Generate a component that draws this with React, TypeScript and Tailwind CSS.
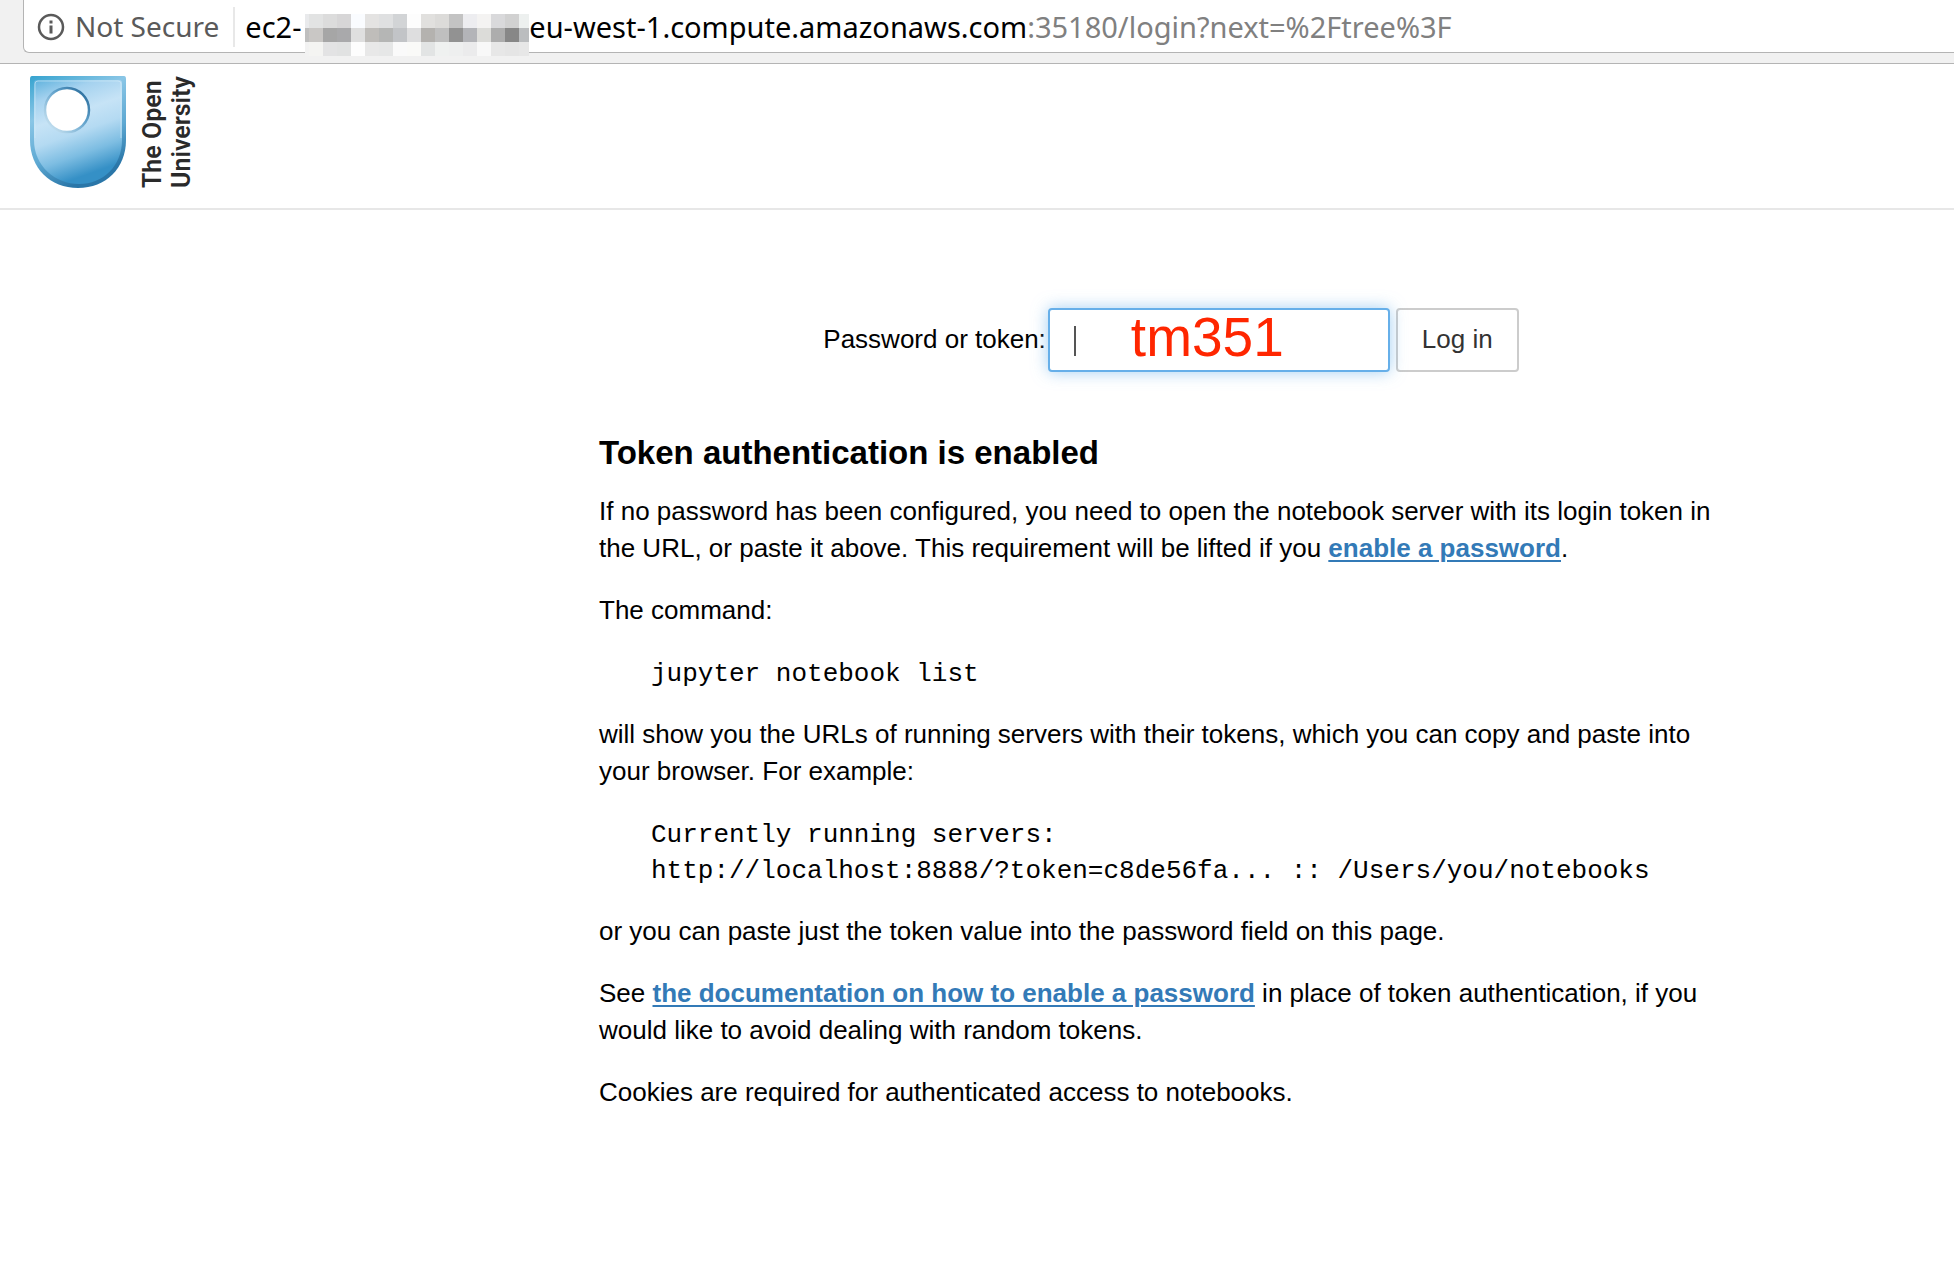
import React from "react";

const mosaicRows: string[][] = [
  ["#e9eaec", "#e2e3e3", "#dcdcdc", "#d7d6d7", "#fafcff", "#e4e3e2", "#dfe0e1", "#d2d4d6", "#fdfdfd", "#e1e0de", "#dcdbd9", "#c3c3c3", "#ededf0", "#f4f3f2", "#d9d9db", "#d1d1d1", "#edf0ef"],
  ["#bfbfbf", "#c9c7c5", "#a6a6a6", "#a9a9ab", "#dfdfdf", "#bfbdba", "#b5b6b5", "#c2c4c7", "#dededf", "#b4b2af", "#bfbfbf", "#929292", "#b3b4b8", "#dcdcd9", "#adadad", "#878787", "#bbbdbf"],
  ["#f2f2f2", "#f4f4f2", "#e3e3e4", "#e1e2e2", "#fdfdfd", "#e8e8e8", "#e6e7e7", "#fafafa", "#fafaf8", "#e2e4e4", "#eff1f0", "#eeefef", "#ebebec", "#f8f8f8", "#e7e7e7", "#e5e5e5", "#e7e7e7"],
];

function InfoIcon() {
  return (
    <svg width="28" height="28" viewBox="0 0 28 28" fill="none" aria-hidden="true" className="shrink-0">
      <circle cx="14" cy="14" r="12" stroke="#5a5a5a" strokeWidth="2.5" />
      <rect x="12.5" y="7.5" width="3" height="3" fill="#5a5a5a" />
      <rect x="12.5" y="12.5" width="3" height="8" fill="#5a5a5a" />
    </svg>
  );
}

/* Blocks that hide the host's address in the URL. */
function Mosaic() {
  return (
    <span
      aria-hidden="true"
      className="relative z-10 mt-[14px] grid shrink-0 grid-cols-[4px_repeat(15,14px)_10px] grid-rows-[14px_14px_14px]"
    >
      {mosaicRows.flatMap((row, r) =>
        row.map((color, c) => <span key={`${r}-${c}`} style={{ backgroundColor: color }} />),
      )}
    </span>
  );
}

function AddressBar() {
  return (
    <div className="h-16 border-b border-[#b4b4b4] bg-[#f1f1f1] pl-[23px]">
      <div className="flex h-[53px] items-start rounded-bl-md border-b border-l border-[#b4b4b4] bg-white pl-[13px] font-['Noto_Sans',sans-serif] text-[29px] leading-[53px] whitespace-nowrap">
        <button type="button" className="flex h-[53px] items-center gap-[10px] text-[28px] text-[#5a5a5a]">
          <InfoIcon />
          <span>Not Secure</span>
        </button>
        <span className="mt-[7px] ml-[14px] h-10 w-[2px] shrink-0 bg-[#e8e8e8]" />
        <div className="ml-[10px] flex items-start">
          <span className="w-[60px] text-black">ec2-</span>
          <Mosaic />
          <span className="text-black">eu-west-1.compute.amazonaws.com</span>
          <span className="text-[#808080]">:35180/login?next=%2Ftree%3F</span>
        </div>
      </div>
    </div>
  );
}

function Logo() {
  return (
    <svg width="168" height="112" viewBox="0 0 168 112" role="img" aria-label="The Open University">
      <defs>
        <linearGradient id="shield" x1="0" y1="0" x2="0.3" y2="1">
          <stop offset="0" stopColor="#5fb2dd" />
          <stop offset="0.2" stopColor="#a5d2ef" />
          <stop offset="0.42" stopColor="#c6e3f6" />
          <stop offset="0.6" stopColor="#b4daf2" />
          <stop offset="0.8" stopColor="#7dbde2" />
          <stop offset="1" stopColor="#3590c6" />
        </linearGradient>
        <linearGradient id="edge" x1="0" y1="0" x2="0.4" y2="1">
          <stop offset="0" stopColor="#35a3cf" />
          <stop offset="0.35" stopColor="#8ac6e6" />
          <stop offset="0.7" stopColor="#5da8d2" />
          <stop offset="1" stopColor="#2a76a8" />
        </linearGradient>
        <linearGradient id="ring" x1="1" y1="0" x2="0" y2="1">
          <stop offset="0" stopColor="#1f6191" />
          <stop offset="0.4" stopColor="#5d9fc9" />
          <stop offset="1" stopColor="#d9edf8" />
        </linearGradient>
      </defs>
      <path d="M2 0H94Q96 0 96 3V64C96 92 76 112 48 112S0 92 0 64V3Q0 0 2 0Z" fill="url(#edge)" />
      <path d="M7 4H89Q92 4 92 7V64C92 90 73 108 49 108S4 90 4 64V7Q4 4 7 4Z" fill="url(#shield)" />
      <path d="M5 62V8Q5 5 8 5H88Q91 5 91 8V62" fill="none" stroke="#d4ecf8" strokeWidth="1" opacity="0.6" />
      <circle cx="37" cy="34" r="22" fill="#fff" stroke="url(#ring)" strokeWidth="2.5" />
      <g fill="#2a2a2a" fontFamily="Roboto, sans-serif" fontWeight="600" fontSize="25">
        <text transform="translate(131 112) rotate(-90)">The Open</text>
        <text transform="translate(160 112) rotate(-90)">University</text>
      </g>
    </svg>
  );
}

function LoginForm() {
  return (
    <form className="flex items-center justify-center" onSubmit={(e) => e.preventDefault()}>
      <label htmlFor="password" className="mr-[2px] pb-[2px] whitespace-nowrap">
        Password or token:
      </label>
      <div className="relative mr-[6px]">
        <input
          id="password"
          type="password"
          className="block h-16 w-[342px] rounded-[4px] border-2 border-[#66afe9] bg-white px-6 text-[#555] shadow-[0_0_16px_rgba(102,175,233,0.6)] outline-none"
        />
        <span aria-hidden="true" className="pointer-events-none absolute top-[18px] left-[26px] h-[30px] w-[2px] bg-[#555]" />
        <span className="pointer-events-none absolute top-0 left-[83px] text-[55px] leading-[58px] text-[#ff2600]">tm351</span>
      </div>
      <button type="submit" className="h-16 rounded-[4px] border-2 border-[#ccc] bg-white px-6 pb-[2px] text-[#333]">
        Log in
      </button>
    </form>
  );
}

function DocLink({ children }: { children: React.ReactNode }) {
  return (
    <a href="#password" className="font-bold text-[#337ab7] underline decoration-2 underline-offset-[3px]">
      {children}
    </a>
  );
}

function Code({ children }: { children: React.ReactNode }) {
  return (
    <pre className="mb-[24px] pt-[2px] pl-[52px] font-['Liberation_Mono',monospace] leading-[36px]">{children}</pre>
  );
}

export default function App() {
  return (
    <div className="min-h-screen bg-white font-['Liberation_Sans',Arial,sans-serif] text-[26px] leading-[37px] text-black">
      <AddressBar />
      <header className="border-b-2 border-[#e7e7e7] pt-3 pb-5 pl-[30px]">
        <a href="#home" className="block w-[168px]">
          <Logo />
        </a>
      </header>
      <main className="pt-[98px] pr-[211px] pl-[599px]">
        <LoginForm />
        <section className="mt-[62px] space-y-[25px]">
          <h3 className="mb-[22px] text-[33px] leading-[37px] font-bold">Token authentication is enabled</h3>
          <p>
            If no password has been configured, you need to open the notebook server with its login token in the URL, or
            paste it above. This requirement will be lifted if you <DocLink>enable a password</DocLink>.
          </p>
          <p>The command:</p>
          <Code>jupyter notebook list</Code>
          <p>
            will show you the URLs of running servers with their tokens, which you can copy and paste into your browser.
            For example:
          </p>
          <Code>
            {"Currently running servers:\nhttp://localhost:8888/?token=c8de56fa... :: /Users/you/notebooks"}
          </Code>
          <p>or you can paste just the token value into the password field on this page.</p>
          <p>
            See <DocLink>the documentation on how to enable a password</DocLink> in place of token authentication, if you
            would like to avoid dealing with random tokens.
          </p>
          <p>Cookies are required for authenticated access to notebooks.</p>
        </section>
      </main>
    </div>
  );
}
